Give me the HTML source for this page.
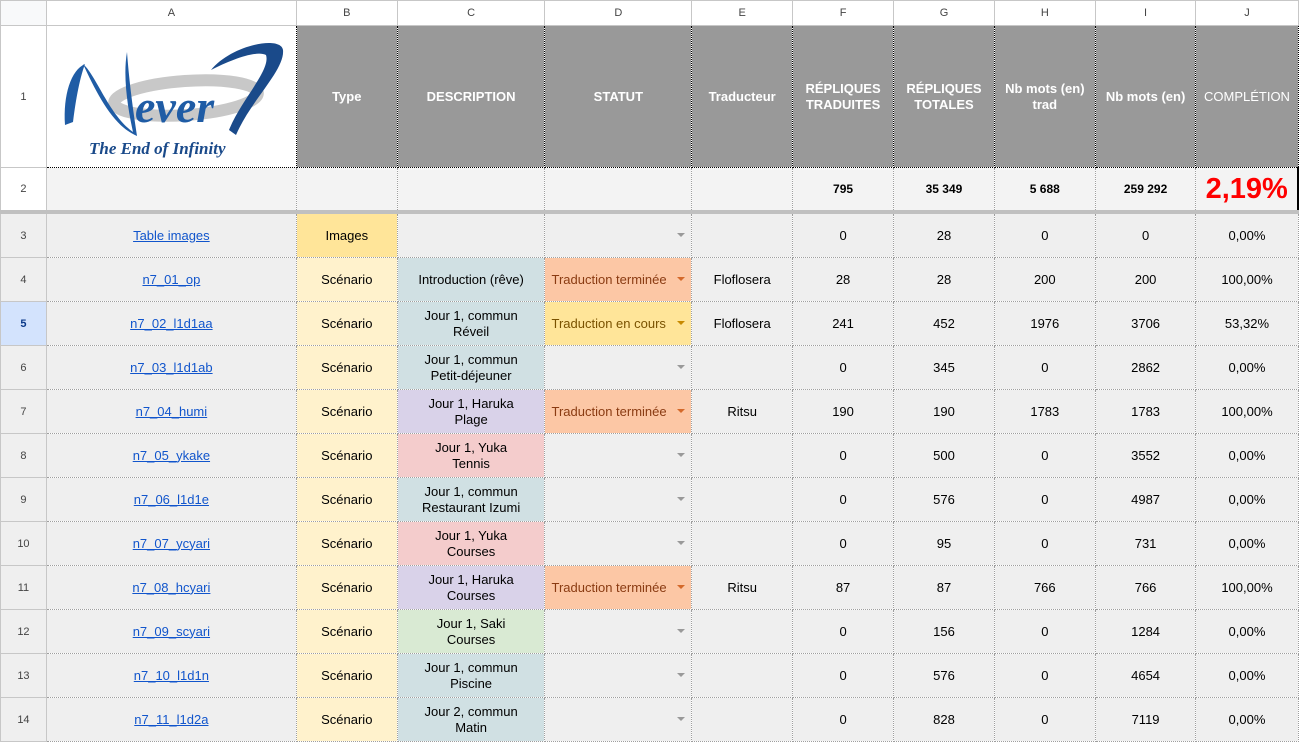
<!DOCTYPE html><html><head><meta charset="utf-8"><style>
body{margin:0;background:#fff;font-family:"Liberation Sans",Arial,sans-serif;font-size:13px;color:#000;width:1299px;height:742px;overflow:hidden}
table{border-collapse:collapse;table-layout:fixed}
td{padding:0;text-align:center;vertical-align:middle;border:1px dotted #9e9e9e;overflow:hidden;line-height:16px;position:relative}
td.rh{background:#fff;border:1px solid #c7c7c7;color:#444;font-size:11px;font-weight:normal}
tr.ch td{background:#fff;border:1px solid #c7c7c7;color:#444;font-size:11px;height:24px}
tr.ch td:first-child{background:#f8f9fa}
tr.h td.g{background:#999;color:#fff;font-weight:bold;border-color:#000}
tr.tot td{background:#f3f3f3;font-weight:bold;font-size:12px;height:42px}
tr.tot td{border-bottom:4px solid #c0c0c0}
tr.r td{height:43px;background:#efefef}
a{color:#1155cc;text-decoration:underline}
.ty{background:#fff2cc!important}.im{background:#ffe599!important}
.bl{background:#d0e0e3!important}.pu{background:#d9d2e9!important}.pk{background:#f4cccc!important}.gr{background:#d9ead3!important}
.st{text-align:left!important;padding-left:6px;font-size:13px}
.tt{background:#fcc7a5!important;color:#8a3b12}.ec{background:#ffe599!important;color:#7a5200}
.ar{position:absolute;right:6px;top:19px;width:0;height:0;border-left:4px solid transparent;border-right:4px solid transparent;border-top:4px solid #999}
.tt .ar{border-top-color:#d4692a}.ec .ar{border-top-color:#c78a00}
</style></head><body>
<table>
<colgroup><col style="width:46px"><col style="width:250px"><col style="width:101px"><col style="width:148px"><col style="width:147px"><col style="width:101px"><col style="width:101px"><col style="width:101px"><col style="width:101px"><col style="width:101px"><col style="width:102px"></colgroup>
<tr class="ch"><td></td><td>A</td><td>B</td><td>C</td><td>D</td><td>E</td><td>F</td><td>G</td><td>H</td><td>I</td><td>J</td></tr>
<tr class="h" style="height:142px"><td class="rh">1</td><td style="background:#fff;border-color:#000">
<svg width="240" height="130" viewBox="0 0 240 130">
<ellipse cx="135" cy="68" rx="72" ry="17" fill="none" stroke="#c8c8c8" stroke-width="12" transform="rotate(-4 135 68)"/>
<path d="M14 95 C12 65 20 40 34 34 C28 50 24 75 22 92 Z" fill="#1f5ca5"/>
<path d="M32 34 C45 45 58 85 82 102 C76 75 72 45 76 22 C78 50 82 80 86 106 C62 96 46 64 32 34Z" fill="#1f5ca5"/>
<text x="84" y="92" font-family="Liberation Serif,serif" font-style="italic" font-weight="bold" font-size="46" fill="#1f5ca5">ever</text>
<path d="M160 40 C180 15 230 5 232 20 C234 40 200 70 185 105 L178 100 C190 70 220 40 215 25 C205 20 180 30 160 40Z" fill="#1a4a8a"/>
<text x="38" y="124" font-family="Liberation Serif,serif" font-style="italic" font-weight="bold" font-size="17" fill="#1a4a8a">The End of Infinity</text>
</svg></td>
<td class="g">Type</td><td class="g">DESCRIPTION</td><td class="g">STATUT</td><td class="g">Traducteur</td><td class="g">RÉPLIQUES TRADUITES</td><td class="g">RÉPLIQUES TOTALES</td><td class="g">Nb mots (en) trad</td><td class="g">Nb mots (en)</td><td class="g" style="font-weight:normal">COMPLÉTION</td></tr>
<tr class="tot"><td class="rh" style="border-bottom:4px solid #c0c0c0;font-weight:normal;background:#fff;font-size:11px">2</td><td></td><td></td><td></td><td></td><td></td><td>795</td><td>35 349</td><td>5 688</td><td>259 292</td><td style="color:#ff0000;font-size:29px;line-height:30px;border-right:2px solid #000">2,19%</td></tr>
<tr class="r"><td class="rh">3</td><td><a>Table images</a></td><td class="im">Images</td><td></td><td><span class="ar"></span></td><td></td><td>0</td><td>28</td><td>0</td><td>0</td><td>0,00%</td></tr>
<tr class="r"><td class="rh">4</td><td><a>n7_01_op</a></td><td class="ty">Scénario</td><td class="bl">Introduction (rêve)</td><td class="st tt">Traduction terminée<span class="ar"></span></td><td>Floflosera</td><td>28</td><td>28</td><td>200</td><td>200</td><td>100,00%</td></tr>
<tr class="r"><td class="rh" style="background:#d3e3fd;color:#0b3a8a;font-weight:bold">5</td><td><a>n7_02_l1d1aa</a></td><td class="ty">Scénario</td><td class="bl">Jour 1, commun<br>Réveil</td><td class="st ec">Traduction en cours<span class="ar"></span></td><td>Floflosera</td><td>241</td><td>452</td><td>1976</td><td>3706</td><td>53,32%</td></tr>
<tr class="r"><td class="rh">6</td><td><a>n7_03_l1d1ab</a></td><td class="ty">Scénario</td><td class="bl">Jour 1, commun<br>Petit-déjeuner</td><td><span class="ar"></span></td><td></td><td>0</td><td>345</td><td>0</td><td>2862</td><td>0,00%</td></tr>
<tr class="r"><td class="rh">7</td><td><a>n7_04_humi</a></td><td class="ty">Scénario</td><td class="pu">Jour 1, Haruka<br>Plage</td><td class="st tt">Traduction terminée<span class="ar"></span></td><td>Ritsu</td><td>190</td><td>190</td><td>1783</td><td>1783</td><td>100,00%</td></tr>
<tr class="r"><td class="rh">8</td><td><a>n7_05_ykake</a></td><td class="ty">Scénario</td><td class="pk">Jour 1, Yuka<br>Tennis</td><td><span class="ar"></span></td><td></td><td>0</td><td>500</td><td>0</td><td>3552</td><td>0,00%</td></tr>
<tr class="r"><td class="rh">9</td><td><a>n7_06_l1d1e</a></td><td class="ty">Scénario</td><td class="bl">Jour 1, commun<br>Restaurant Izumi</td><td><span class="ar"></span></td><td></td><td>0</td><td>576</td><td>0</td><td>4987</td><td>0,00%</td></tr>
<tr class="r"><td class="rh">10</td><td><a>n7_07_ycyari</a></td><td class="ty">Scénario</td><td class="pk">Jour 1, Yuka<br>Courses</td><td><span class="ar"></span></td><td></td><td>0</td><td>95</td><td>0</td><td>731</td><td>0,00%</td></tr>
<tr class="r"><td class="rh">11</td><td><a>n7_08_hcyari</a></td><td class="ty">Scénario</td><td class="pu">Jour 1, Haruka<br>Courses</td><td class="st tt">Traduction terminée<span class="ar"></span></td><td>Ritsu</td><td>87</td><td>87</td><td>766</td><td>766</td><td>100,00%</td></tr>
<tr class="r"><td class="rh">12</td><td><a>n7_09_scyari</a></td><td class="ty">Scénario</td><td class="gr">Jour 1, Saki<br>Courses</td><td><span class="ar"></span></td><td></td><td>0</td><td>156</td><td>0</td><td>1284</td><td>0,00%</td></tr>
<tr class="r"><td class="rh">13</td><td><a>n7_10_l1d1n</a></td><td class="ty">Scénario</td><td class="bl">Jour 1, commun<br>Piscine</td><td><span class="ar"></span></td><td></td><td>0</td><td>576</td><td>0</td><td>4654</td><td>0,00%</td></tr>
<tr class="r"><td class="rh">14</td><td><a>n7_11_l1d2a</a></td><td class="ty">Scénario</td><td class="bl">Jour 2, commun<br>Matin</td><td><span class="ar"></span></td><td></td><td>0</td><td>828</td><td>0</td><td>7119</td><td>0,00%</td></tr>
</table>
</body></html>
